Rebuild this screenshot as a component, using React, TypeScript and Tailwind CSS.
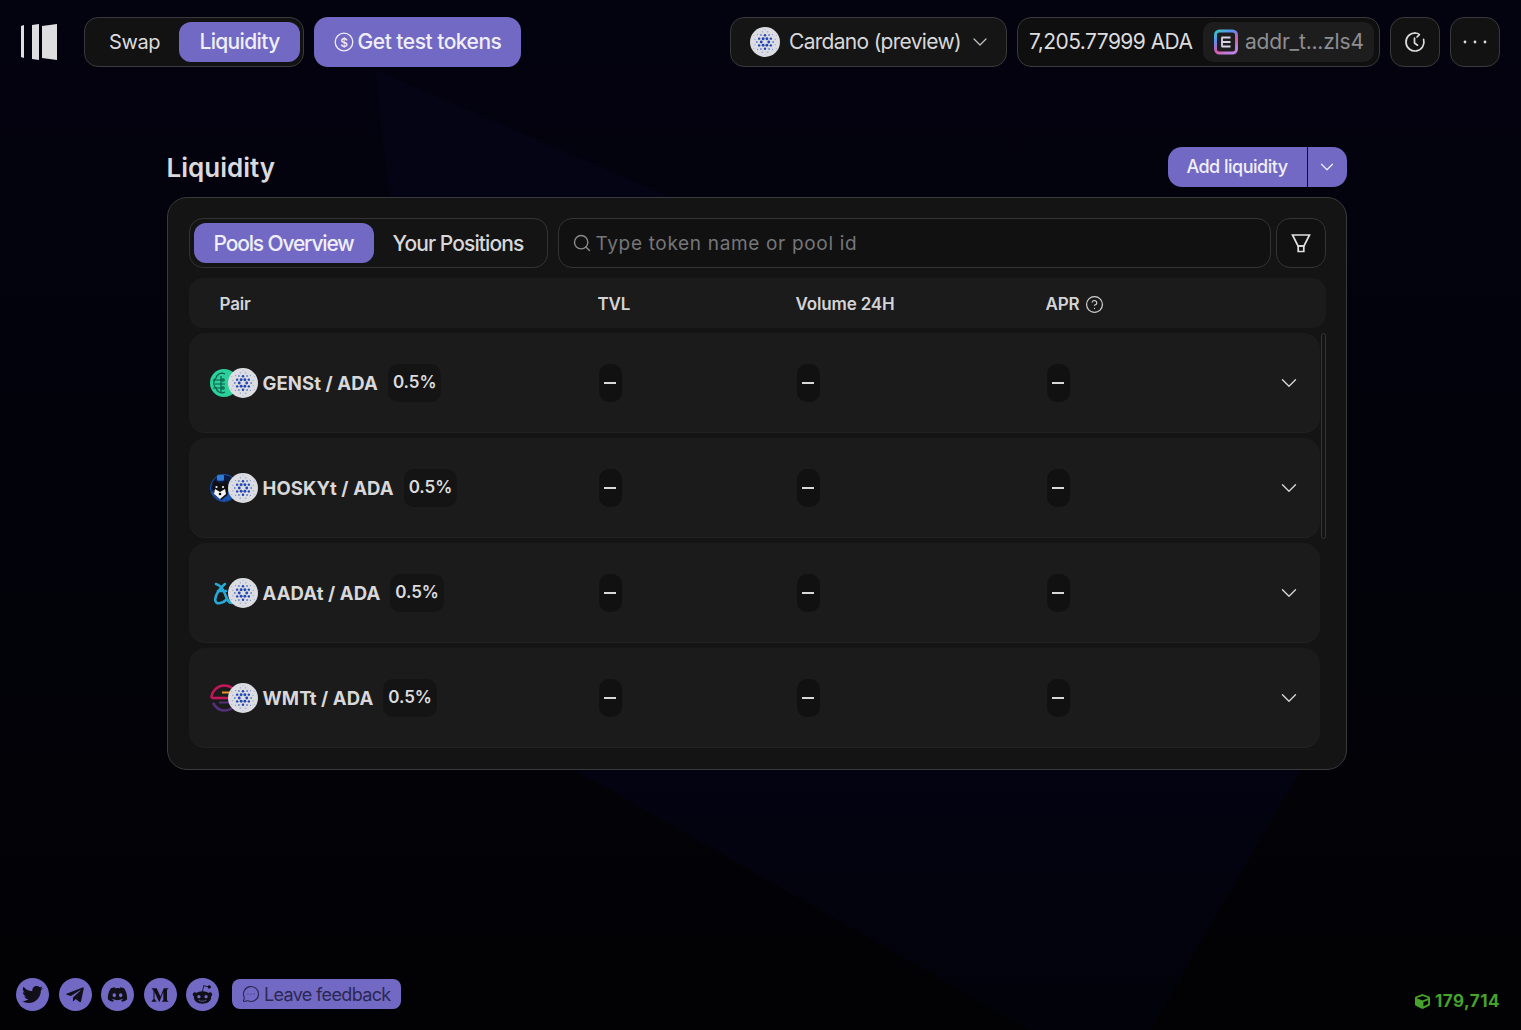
import { CircleHelp, ChevronDown, MessageCircleMore, Search } from "lucide-react";
import { FaCube, FaDiscord, FaMediumM, FaRedditAlien, FaTelegramPlane, FaTwitter } from "react-icons/fa";

const inter = "font-['Inter',sans-serif]";

function CardanoIcon({ size }: { size: number }) {
  const rings = [
    { r: 3.5, n: 6, d: 1.35, o: 0 },
    { r: 6.3, n: 6, d: 1.15, o: 30 },
    { r: 7.6, n: 6, d: 0.75, o: 0 },
    { r: 9.8, n: 12, d: 0.55, o: 15 },
    { r: 12, n: 6, d: 0.45, o: 30 },
  ];
  return (
    <svg width={size} height={size} viewBox="0 0 28 28" className="shrink-0">
      <circle cx="14" cy="14" r="14" fill="#dcdde2" />
      {rings.map((ring, i) =>
        Array.from({ length: ring.n }).map((_, j) => {
          const a = ((j * 360) / ring.n + ring.o) * (Math.PI / 180);
          return (
            <circle
              key={`${i}-${j}`}
              cx={14 + ring.r * Math.cos(a)}
              cy={14 + ring.r * Math.sin(a)}
              r={ring.d}
              fill={i < 3 ? "#2146b4" : "#7a8cc8"}
            />
          );
        }),
      )}
    </svg>
  );
}

function GensIcon() {
  return (
    <svg width="28" height="28" viewBox="0 0 28 28">
      <circle cx="14" cy="14" r="14" fill="#2bd09a" />
      <g fill="none" stroke="#0d5a46" strokeWidth="1.2">
        <path d="M15 5c-4-2-8 0-9 4-3 2-3 8 0 10 1 4 5 6 9 4" />
        <path d="M3 11h8M5 15h10M3 19h8M11 7v16" />
        <circle cx="13" cy="11" r="1.2" />
        <circle cx="13" cy="19" r="1.2" />
      </g>
    </svg>
  );
}

function HoskyIcon() {
  return (
    <svg width="28" height="28" viewBox="0 0 28 28">
      <circle cx="14" cy="14" r="13.5" fill="#0b1a40" stroke="#1c56b5" strokeWidth="1" />
      <path d="M2 19c3 5 7 8 12 8s8-3 10-6V16H3z" fill="#1c56b5" />
      <path d="M2.5 13l2-7 4 3h5l3-3 2 8-1 7-6 5-7-5z" fill="#101012" />
      <path d="M5 15l5 3 5-3 1 5-6 5-6-5z" fill="#f4f4f4" />
      <circle cx="6.5" cy="13" r="1.1" fill="#f4f4f4" />
      <circle cx="13" cy="13" r="1.1" fill="#f4f4f4" />
      <rect x="7" y="0.8" width="7" height="6" rx="1.2" fill="#2f7bd8" />
      <circle cx="10" cy="20" r="1.3" fill="#000" />
    </svg>
  );
}

function AadaIcon() {
  return (
    <svg width="28" height="28" viewBox="0 0 28 28" fill="none" stroke="#27a9d8" strokeWidth="2.6" strokeLinecap="round">
      <path d="M6 5c5 1 7 5 9 10s3 9 7 9" />
      <path d="M15 5c-4 3-8 9-9 12-1 3-1 6 1 7 3 1 7-1 9-3" />
      <path d="M8 12h8" />
    </svg>
  );
}

function WmtIcon() {
  return (
    <svg width="28" height="28" viewBox="0 0 28 28" fill="none">
      <path d="M1.5 14C1.5 7 8 1.5 14 1.5s10 3 12 8" stroke="#c2185b" strokeWidth="2.6" />
      <path d="M1.5 14h24" stroke="#c2185b" strokeWidth="2.6" />
      <path d="M12 8.5h12" stroke="#e8942c" strokeWidth="2" />
      <path d="M3 19c3 5 7 7.5 11 7.5 5 0 9-2 11-6" stroke="#54307c" strokeWidth="2.6" />
      <path d="M9 18.5h14" stroke="#54307c" strokeWidth="2" />
    </svg>
  );
}

function Pair({ icon, name }: { icon: React.ReactNode; name: string }) {
  return (
    <div className="flex items-center w-[389px] shrink-0">
      <div className="flex w-[48px] shrink-0 items-center">
        <div className="w-[18px] shrink-0">{icon}</div>
        <div className="relative z-10 shrink-0 rounded-full">
          <CardanoIcon size={30} />
        </div>
      </div>
      <span className="ml-[5px] pt-[2px] font-['Inter',sans-serif] text-[18.5px] font-bold tracking-[0.1px] text-[#d8d8da]">{name}</span>
      <span className="ml-[10px] flex h-[38px] items-center rounded-[10px] bg-[#141414] px-[5px] pt-[1px] font-['Inter',sans-serif] text-[17px] font-semibold tracking-[-0.05px] text-[#dcdcde]">
        0.5%
      </span>
    </div>
  );
}

function Dash() {
  return (
    <div className="flex h-[38px] w-[23px] items-center justify-center rounded-[10px] bg-[#111111]">
      <div className="h-[2px] w-[12px] bg-[#d8d8da]" />
    </div>
  );
}

function Row({ icon, name }: { icon: React.ReactNode; name: string }) {
  return (
    <div className="flex h-[100px] items-center rounded-[16px] border-b border-[#222223] bg-[#1b1b1c] pl-[21px] pr-[18px]">
      <Pair icon={icon} name={name} />
      <div className="w-[198px] shrink-0"><Dash /></div>
      <div className="w-[250px] shrink-0"><Dash /></div>
      <Dash />
      <ChevronDown className="ml-auto text-[#d4d4d6]" size={26} strokeWidth={1.3} />
    </div>
  );
}

function Social({ children }: { children: React.ReactNode }) {
  return (
    <div className="flex h-[33px] w-[33px] items-center justify-center rounded-full bg-[#7269c4] text-[#111019]">
      {children}
    </div>
  );
}

export default function App() {
  return (
    <div className={`${inter} relative flex h-[1030px] flex-col overflow-hidden bg-[#03020f]`}>
      <svg className="pointer-events-none absolute inset-0" width="1521" height="1030" viewBox="0 0 1521 1030">
        <defs>
          <linearGradient id="bgv" x1="0" y1="0" x2="0" y2="1">
            <stop offset="0" stopColor="#03020f" />
            <stop offset="0.72" stopColor="#020208" />
            <stop offset="1" stopColor="#020204" />
          </linearGradient>
          <linearGradient id="beam" x1="0" y1="0" x2="0" y2="1">
            <stop offset="0" stopColor="#040414" />
            <stop offset="0.7" stopColor="#040312" />
            <stop offset="1" stopColor="#02020a" />
          </linearGradient>
        </defs>
        <rect width="1521" height="1030" fill="url(#bgv)" />
        <polygon points="375,70 670,197 1300,770 1150,1030 1030,1030 575,770 390,200" fill="url(#beam)" />
      </svg>

      <header className="relative flex h-[84px] items-start pl-[21px] pr-[21px] pt-[17px]">
        <svg width="36" height="36" viewBox="0 0 36 36" className="mt-[7px] shrink-0">
          <polygon points="0,2 3,1 3,34 0,33" fill="#dedee0" />
          <polygon points="11,1 18,0 18,36 11,35" fill="#dedee0" />
          <polygon points="21,2 36,0 36,36 21,34" fill="#dedee0" />
        </svg>
        <div className="ml-[27px] flex h-[50px] w-[220px] items-center rounded-[14px] border border-[#3a3a3c] bg-[#121212] pl-[24px] pr-[3px]">
          <span className="text-[20px] tracking-[-0.4px] text-[#dcdcde]">Swap</span>
          <span className="ml-auto flex h-[40px] w-[121px] items-center justify-center rounded-[12px] bg-[#7269c4] text-[21px] font-medium tracking-[-0.65px] text-[#f0eff8]">
            Liquidity
          </span>
        </div>
        <button className="ml-[10px] flex h-[50px] w-[207px] items-center justify-center gap-[4px] rounded-[14px] bg-[#7269c4] text-[21px] font-medium tracking-[-0.5px] text-[#f0eff8]">
          <svg width="20" height="20" viewBox="0 0 20 20" fill="none">
            <circle cx="10" cy="10" r="8.8" stroke="#f0eff8" strokeWidth="1.3" />
            <text x="10" y="14.5" textAnchor="middle" fontSize="12" fill="#f0eff8" fontFamily="Inter, sans-serif">$</text>
          </svg>
          Get test tokens
        </button>

        <div className="ml-auto flex h-[50px] w-[277px] items-center rounded-[14px] border border-[#3a3a3c] bg-[#151516] pl-[19px]">
          <CardanoIcon size={30} />
          <span className="ml-[9px] text-[21px] tracking-[-0.7px] text-[#d8d8da]">Cardano (preview)</span>
          <ChevronDown className="ml-[7px] text-[#c4c4c6]" size={24} strokeWidth={1.2} />
        </div>
        <div className="ml-[10px] flex h-[50px] w-[363px] items-center rounded-[14px] border border-[#3a3a3c] bg-[#0f0f10] pl-[11px] pr-[5px]">
          <span className="text-[21px] tracking-[-0.55px] text-[#dcdcde]">7,205.77999 ADA</span>
          <div className="ml-auto flex h-[40px] w-[171px] items-center rounded-[10px] bg-[#1d1d1e] pl-[11px]">
            <svg width="24" height="26" viewBox="0 0 24 26" fill="none" className="shrink-0">
              <defs>
                <linearGradient id="eternl" x1="0" y1="0" x2="0.6" y2="1">
                  <stop offset="0" stopColor="#38c6c8" />
                  <stop offset="0.35" stopColor="#5f8df0" />
                  <stop offset="0.7" stopColor="#d65aa8" />
                  <stop offset="1" stopColor="#c080e0" />
                </linearGradient>
              </defs>
              <rect x="1.5" y="2" width="21" height="22" rx="4" stroke="url(#eternl)" strokeWidth="3" />
              <path d="M7.5 8.5h9M7.5 13h9M7.5 17.5h9M8 8.5v9" stroke="#d8d4e8" strokeWidth="1.8" />
            </svg>
            <span className="ml-[7px] text-[21px] tracking-[-0.2px] text-[#8e8e92]">addr_t...zls4</span>
          </div>
        </div>
        <div className="ml-[10px] flex h-[50px] w-[50px] items-center justify-center rounded-[14px] border border-[#3a3a3c] bg-[#121212]">
          <svg width="24" height="24" viewBox="0 0 24 24" fill="none" stroke="#dcdcde" strokeWidth="1.7" strokeLinecap="round" strokeLinejoin="round">
            <path d="M12 3a9 9 0 1 0 8.6 6.4" />
            <path d="M12 3c1.8 0 3.4.6 4.4 1.6L14 7" />
            <path d="M11.5 8v5l3 2.2" />
          </svg>
        </div>
        <div className="ml-[10px] flex h-[50px] w-[50px] items-center justify-center rounded-[14px] border border-[#3a3a3c] bg-[#121212]">
          <svg width="26" height="6" viewBox="0 0 26 6" fill="#dcdcde">
            <circle cx="3" cy="3" r="1.4" />
            <circle cx="13" cy="3" r="1.4" />
            <circle cx="23" cy="3" r="1.4" />
          </svg>
        </div>
      </header>

      <main className="relative mx-auto mt-[63px] w-[1180px] -translate-x-[4px]">
        <div className="flex h-[40px] items-center justify-between">
          <h1 className="text-[26px] font-semibold tracking-[0px] text-[#dadadd]">Liquidity</h1>
          <div className="flex h-[40px] w-[179px] overflow-hidden rounded-[14px] bg-[#7269c4] text-[#f0eff8]">
            <span className="flex w-[140px] items-center justify-center border-r border-[#0f0e1c] pb-[2px] text-[18px] font-medium tracking-[-0.5px]">
              Add liquidity
            </span>
            <span className="flex flex-1 items-center justify-center">
              <ChevronDown size={22} strokeWidth={1.3} />
            </span>
          </div>
        </div>

        <section className="mt-[10px] rounded-[20px] border border-[#3a3a3c] bg-[#141414] pb-[21px] pl-[21px] pr-[20px] pt-[20px]">
          <div className="flex h-[50px] items-center">
            <div className="flex h-[50px] w-[359px] items-center rounded-[14px] border border-[#343436] pl-[4px]">
              <span className="flex h-[40px] w-[180px] items-center justify-center rounded-[12px] bg-[#7269c4] pt-[2px] text-[21px] font-medium tracking-[-1.15px] text-[#f0eff8]">
                Pools Overview
              </span>
              <span className="ml-[19px] pt-[2px] text-[21px] font-medium tracking-[-0.9px] text-[#d8d8da]">Your Positions</span>
            </div>
            <div className="ml-[10px] flex h-[50px] w-[713px] items-center rounded-[14px] border border-[#343436] bg-[#111111] pl-[13px]">
              <Search size={20} strokeWidth={1.7} className="text-[#8a8a8c]" />
              <span className="ml-[4px] pt-[2px] text-[19px] tracking-[0.67px] text-[#76767a]">Type token name or pool id</span>
            </div>
            <div className="ml-[5px] flex h-[50px] w-[50px] items-center justify-center rounded-[14px] border border-[#343436] bg-[#111111]">
              <svg width="20" height="20" viewBox="0 0 20 20" fill="none" stroke="#e0e0e2" strokeWidth="1.7">
                <path d="M1.5 2h17l-5.5 11H7z" />
                <path d="M7.2 13h5.6v5.5H7.2z" />
              </svg>
            </div>
          </div>

          <div className="mt-[10px] flex h-[50px] items-center rounded-[14px] bg-[#1b1b1c] pl-[31px] pt-[3px] text-[17px] font-semibold tracking-[-0.15px] text-[#d4d4d6]">
            <span className="w-[378px]">Pair</span>
            <span className="w-[198px]">TVL</span>
            <span className="w-[250px]">Volume 24H</span>
            <span className="flex items-center gap-[6px]">
              APR <CircleHelp size={19} strokeWidth={1.5} />
            </span>
          </div>

          <div className="relative mt-[5px] flex w-[1131px] flex-col gap-[5px]">
            <div className="absolute -right-[6px] top-0 h-[206px] w-[5px] rounded-full border border-[#343436]" />
            <Row icon={<GensIcon />} name="GENSt / ADA" />
            <Row icon={<HoskyIcon />} name="HOSKYt / ADA" />
            <Row icon={<AadaIcon />} name="AADAt / ADA" />
            <Row icon={<WmtIcon />} name="WMTt / ADA" />
          </div>
        </section>
      </main>

      <footer className="relative mt-auto flex h-[70px] items-start pl-[16px] pr-[21px] pt-[18px]">
        <div className="flex items-center gap-[9.5px]">
          <Social><FaTwitter size={21} /></Social>
          <Social><FaTelegramPlane size={20} /></Social>
          <Social><FaDiscord size={21} /></Social>
          <Social><FaMediumM size={18} /></Social>
          <Social><FaRedditAlien size={21} /></Social>
        </div>
        <div className="ml-[13px] mt-[1px] flex h-[30px] w-[169px] items-center rounded-[8px] bg-[#7269c4] pl-[10px] text-[18px] tracking-[-0.65px] text-[#2b2853]">
          <MessageCircleMore size={18} strokeWidth={1.5} />
          <span className="ml-[4px]">Leave feedback</span>
        </div>
        <div className="ml-auto mt-[11px] flex items-center gap-[5px] text-[17px] font-bold tracking-[0.5px] text-[#46a32b]">
          <FaCube size={15} />
          179,714
        </div>
      </footer>
    </div>
  );
}
